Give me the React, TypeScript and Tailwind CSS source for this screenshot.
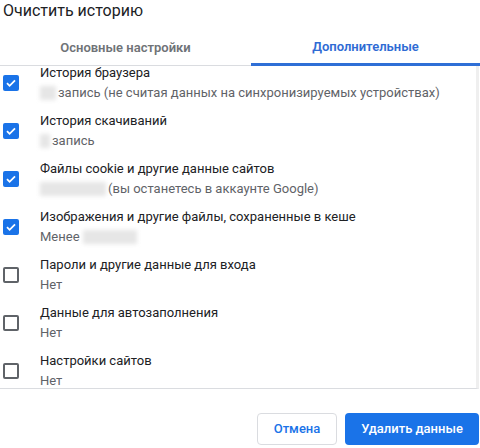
import React from 'react';

type Item = {
  title: string;
  checked: boolean;
  blur?: number;
  before?: string;
  after?: string;
};

const items: Item[] = [
  { title: 'История браузера', checked: true, blur: 16, after: 'запись (не считая данных на синхронизируемых устройствах)' },
  { title: 'История скачиваний', checked: true, blur: 10, after: 'запись' },
  { title: 'Файлы cookie и другие данные сайтов', checked: true, blur: 66, after: '(вы останетесь в аккаунте Google)' },
  { title: 'Изображения и другие файлы, сохраненные в кеше', checked: true, before: 'Менее ', blur: 54 },
  { title: 'Пароли и другие данные для входа', checked: false, after: 'Нет' },
  { title: 'Данные для автозаполнения', checked: false, after: 'Нет' },
  { title: 'Настройки сайтов', checked: false, after: 'Нет' },
];

const Check = ({ on }: { on: boolean }) =>
  on ? (
    <div className="w-4 h-4 rounded-[2px] bg-[#1a73e8] flex items-center justify-center shrink-0">
      <svg width="12" height="12" viewBox="0 0 12 12" fill="none">
        <path d="M2 6.2l2.6 2.6L10 3.4" stroke="white" strokeWidth="1.8" />
      </svg>
    </div>
  ) : (
    <div className="w-4 h-4 rounded-[2px] border-2 border-[#5f6368] shrink-0" />
  );

export default function App() {
  return (
    <div className="w-[480px] h-[448px] bg-white overflow-hidden text-[13px]" style={{ fontFamily: 'Roboto, "Liberation Sans", sans-serif' }}>
      <div className="pl-[3px] pt-[1px] h-[30px] text-[16px] leading-[20px] text-[#202124]">Очистить историю</div>

      {/* Tabs */}
      <div className="flex h-[36px] border-b border-[#dadce0]">
        <div className="w-[251px] flex items-center justify-center font-semibold text-[#6f7377]">Основные настройки</div>
        <div className="flex-1 flex flex-col">
          <div className="flex-1 flex items-center justify-center font-semibold text-[#2f6bd4]">Дополнительные</div>
          <div className="h-[3px] bg-[#2f6fd6] -mb-px" />
        </div>
      </div>

      {/* List */}
      <div className="h-[323px] overflow-hidden border-b border-[#dadce0] border-r-[3px] border-r-[#efefef] w-[479px]">
        <div className="-mt-[3px] flex flex-col gap-[8px]">
          {items.map((it, i) => (
            <div key={i} className="flex items-center h-[40px]">
              <div className="w-[40px] pl-[3px]">
                <Check on={it.checked} />
              </div>
              <div className="flex flex-col">
                <div className="leading-[20px] text-[#202124]">{it.title}</div>
                <div className="leading-[20px] text-[#5f6368] flex items-center">
                  {it.before && <span className="whitespace-pre">{it.before}</span>}
                  {it.blur && (
                    <span
                      className="inline-block h-[14px] bg-[#e6e6e6] blur-[2px] mr-[2px]"
                      style={{ width: it.blur }}
                    />
                  )}
                  {it.after && <span>{it.after}</span>}
                </div>
              </div>
            </div>
          ))}
        </div>
      </div>

      {/* Footer */}
      <div className="flex justify-end gap-[8px] pt-[24px] pr-px">
        <button className="w-[80px] h-[32px] rounded-[4px] border border-[#dadce0] bg-white text-[#1a73e8] font-medium">Отмена</button>
        <button className="w-[134px] h-[32px] rounded-[4px] bg-[#1a73e8] text-white font-medium">Удалить данные</button>
      </div>
    </div>
  );
}
